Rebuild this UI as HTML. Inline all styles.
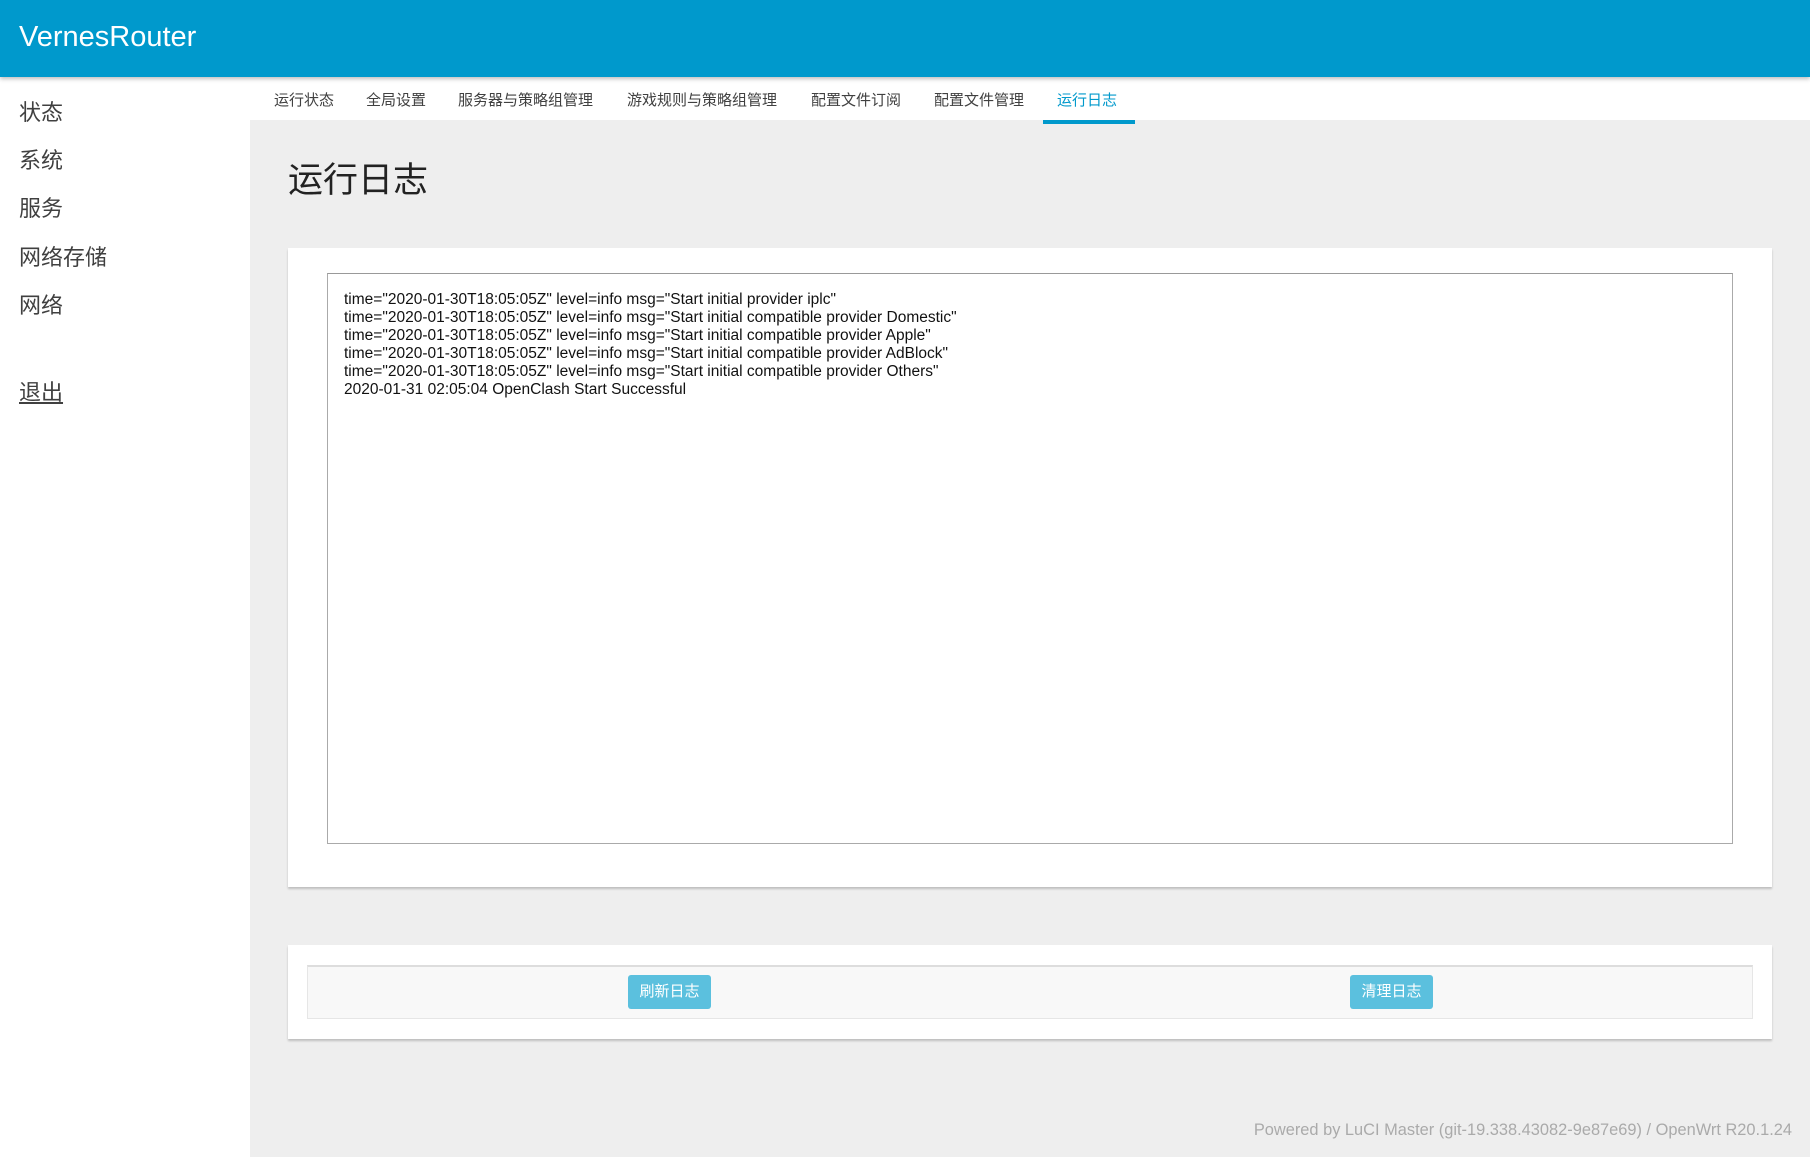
<!DOCTYPE html>
<html><head><meta charset="utf-8"><style>
*{margin:0;padding:0;box-sizing:border-box}
body{width:1810px;height:1157px;background:#fff;font-family:"Liberation Sans","Noto Sans CJK SC",sans-serif;position:relative;overflow:hidden;color:#404040}
.hd{position:absolute;left:0;top:0;width:1810px;height:77px;background:#0099cc;box-shadow:0 2px 4px rgba(0,0,0,.25);z-index:2}
.hd span{position:absolute;left:19px;top:21px;font-size:29px;color:#fff}
.side a{position:absolute;left:19px;font-size:22px;color:#404040;text-decoration:none}
.main{position:absolute;left:250px;top:120px;width:1560px;height:1037px;background:#eee}
.tab{position:absolute;top:89px;font-size:15px;color:#404040}
.act{color:#0099cc}
.ul{position:absolute;left:1043px;top:120px;width:92px;height:4px;background:#0099cc}
h1{position:absolute;left:288px;top:152px;font-size:35px;font-weight:normal;color:#222}
.card{position:absolute;background:#fff;box-shadow:0 2px 2px rgba(0,0,0,.2)}
.ta{position:absolute;left:327px;top:273px;width:1406px;height:571px;border:1px solid #aaa;border-top-color:#999;background:#fff;padding:17px 16px;font-size:15.5px;line-height:18px;color:#111;white-space:pre}
.box{position:absolute;left:307px;top:965px;width:1446px;height:54px;background:#f8f8f8;border:1px solid #e6e6e6;border-top:2px solid #ddd}
.btn{position:absolute;top:975px;width:83px;height:34px;background:#5bc0de;border-radius:3px;color:#fff;font-size:15px;text-align:center;line-height:34px}
.ft{position:absolute;right:18px;top:1121px;font-size:16.4px;color:#aaa}
</style></head><body>
<div class="hd"><span>VernesRouter</span></div>
<div class="side">
<a style="top:95px">状态</a><a style="top:143px">系统</a><a style="top:191px">服务</a><a style="top:240px">网络存储</a><a style="top:288px">网络</a><a style="top:375px;text-decoration:underline">退出</a>
</div>
<div class="main"></div>
<span class="tab" style="left:274px">运行状态</span>
<span class="tab" style="left:366px">全局设置</span>
<span class="tab" style="left:458px">服务器与策略组管理</span>
<span class="tab" style="left:627px">游戏规则与策略组管理</span>
<span class="tab" style="left:811px">配置文件订阅</span>
<span class="tab" style="left:934px">配置文件管理</span>
<span class="tab act" style="left:1057px">运行日志</span>
<div class="ul"></div>
<h1>运行日志</h1>
<div class="card" style="left:288px;top:248px;width:1484px;height:639px"></div>
<div class="ta">time="2020-01-30T18:05:05Z" level=info msg="Start initial provider iplc"
time="2020-01-30T18:05:05Z" level=info msg="Start initial compatible provider Domestic"
time="2020-01-30T18:05:05Z" level=info msg="Start initial compatible provider Apple"
time="2020-01-30T18:05:05Z" level=info msg="Start initial compatible provider AdBlock"
time="2020-01-30T18:05:05Z" level=info msg="Start initial compatible provider Others"
2020-01-31 02:05:04 OpenClash Start Successful</div>
<div class="card" style="left:288px;top:945px;width:1484px;height:94px"></div>
<div class="box"></div>
<div class="btn" style="left:628px">刷新日志</div>
<div class="btn" style="left:1350px">清理日志</div>
<div class="ft">Powered by LuCI Master (git-19.338.43082-9e87e69) / OpenWrt R20.1.24</div>
</body></html>
